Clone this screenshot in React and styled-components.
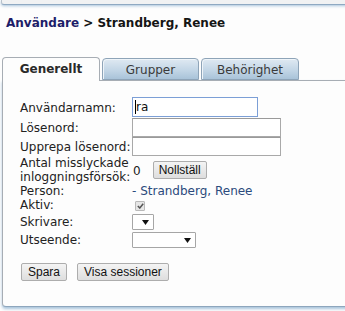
import React from "react";
import styled, { createGlobalStyle } from "styled-components";

const Global = createGlobalStyle`
  html, body { margin: 0; padding: 0; background: #fdfdfd; overflow: hidden; }
  body { font-family: "DejaVu Sans", Verdana, sans-serif; font-size: 12px; color: #222; }
`;

const Page = styled.div`
  width: 345px;
  height: 311px;
  display: flex;
  flex-direction: column;
`;

const TopBar = styled.div`
  height: 4px;
  margin-left: 1px;
  width: 360px;
  background: #f1f2f3;
  border-left: 1px solid #b8c2cc;
  border-bottom: 1px solid #8fa9c2;
  box-shadow: 0 1px 3px #a9c4dc;
  border-bottom-left-radius: 3px;
`;

const Title = styled.h1`
  margin: 11px 0 0 6px;
  font-size: 12px;
  line-height: 14px;
  font-weight: bold;
  color: #151515;
`;

const Crumb = styled.span`
  color: #1d1d69;
`;

const Tabs = styled.div`
  display: flex;
  align-items: flex-end;
  gap: 2px;
  margin: 27px 0 0 2px;
  height: 23px;
  position: relative;
  z-index: 1;
`;

const Tab = styled.div`
  box-sizing: border-box;
  width: ${(p) => p.$w}px;
  height: ${(p) => (p.$active ? 24 : 22)}px;
  margin-bottom: ${(p) => (p.$active ? -1 : 0)}px;
  border: 1px solid ${(p) => (p.$active ? "#a7adb4" : "#8ea4b8")};
  border-bottom: ${(p) => (p.$active ? "none" : "1px solid #8ea4b8")};
  border-radius: 4px 4px 0 0;
  background: ${(p) =>
    p.$active ? "#fdfdfd" : "linear-gradient(#dfe9f2, #c3d6e6 55%, #a9c3d9)"};
  box-shadow: ${(p) => (p.$active ? "none" : "inset 1px 1px 0 #eef4f9")};
  color: ${(p) => (p.$active ? "#2a2a2a" : "#3a3a3a")};
  font-weight: ${(p) => (p.$active ? "bold" : "normal")};
  font-size: 12px;
  display: flex;
  justify-content: center;
  padding-top: 4px;
  line-height: 14px;
`;

const Panel = styled.div`
  box-sizing: border-box;
  margin-left: 2px;
  width: 360px;
  height: 227px;
  border: 1px solid #a7adb4;
  border-radius: 0 0 0 4px;
  border-bottom-color: #8ea6bd;
  box-shadow: 0 2px 3px #a9c4dc;
  background: #fdfdfd;
  padding: 16px 0 0 17px;
`;

const Form = styled.div`
  display: grid;
  grid-template-columns: 112px auto;
  align-items: center;
`;

const Label = styled.div`
  height: ${(p) => p.$h}px;
  display: flex;
  align-items: center;
  line-height: 14px;
  color: #222;
  white-space: nowrap;
`;

const Value = styled.div`
  height: ${(p) => p.$h}px;
  display: flex;
  align-items: center;
  gap: 12px;
`;

const FakeInput = styled.div`
  box-sizing: border-box;
  width: ${(p) => p.$w}px;
  height: ${(p) => p.$h}px;
  border: 1px solid ${(p) => (p.$focus ? "#7c9fd6" : "#a9a9a9")};
  border-top-color: ${(p) => (p.$focus ? "#7c9fd6" : "#9a9a9a")};
  background: #fff;
  display: flex;
  align-items: center;
  padding-left: 2px;
  font-size: 12px;
  color: #111;
  align-self: ${(p) => (p.$top ? "flex-start" : "center")};
`;

const Caret = styled.span`
  display: inline-block;
  width: 1px;
  height: 14px;
  background: #000;
`;

const Button = styled.button`
  box-sizing: border-box;
  height: 18px;
  padding: 0 ${(p) => p.$pad || 6}px;
  font-family: "Liberation Sans", Arial, sans-serif;
  font-size: 12px;
  color: #111;
  border: 1px solid #adadad;
  border-radius: 2px;
  background: linear-gradient(#f4f4f4, #dedede);
  line-height: 16px;
`;

const Zero = styled.span`
  margin-left: 1px;
  padding-top: 2px;
`;

const PersonLink = styled.span`
  color: #2b4a7c;
`;

const Check = styled.span`
  box-sizing: border-box;
  width: 10px;
  height: 10px;
  margin-left: 3px;
  margin-top: 2px;
  border: 1px solid #b9b9b9;
  background: #e6e6e6;
  border-radius: 1px;
  display: flex;
  align-items: center;
  justify-content: center;
`;

const Select = styled.div`
  box-sizing: border-box;
  width: ${(p) => p.$w}px;
  height: 16px;
  border: 1px solid #a6a6a6;
  border-radius: 1px;
  background: #fff;
  display: flex;
  align-items: center;
  justify-content: flex-end;
  padding-right: 4px;
`;

const Actions = styled.div`
  display: flex;
  gap: 10px;
  margin-top: 14px;
  margin-left: 1px;
`;

const Arrow = () => (
  <svg width="7" height="5" viewBox="0 0 7 5">
    <path d="M0 0 H7 L3.5 5 Z" fill="#111" />
  </svg>
);

export default function App() {
  return (
    <Page>
      <Global />
      <TopBar />
      <Title>
        <Crumb>Användare</Crumb> &gt; Strandberg, Renee
      </Title>
      <Tabs>
        <Tab $active $w={98}>Generellt</Tab>
        <Tab $w={97}>Grupper</Tab>
        <Tab $w={98}>Behörighet</Tab>
      </Tabs>
      <Panel>
        <Form>
          <Label $h={21}>Användarnamn:</Label>
          <Value $h={21}>
            <FakeInput $focus $w={126} $h={20} $top>
              <Caret />ra
            </FakeInput>
          </Value>

          <Label $h={19}>Lösenord:</Label>
          <Value $h={19}>
            <FakeInput $w={149} $h={19} />
          </Value>

          <Label $h={19}>Upprepa lösenord:</Label>
          <Value $h={19}>
            <FakeInput $w={149} $h={19} />
          </Value>

          <Label $h={28}>
            Antal misslyckade
            <br />
            inloggningsförsök:
          </Label>
          <Value $h={28}>
            <Zero>0</Zero>
            <Button $pad={5}>Nollställ</Button>
          </Value>

          <Label $h={13}>Person:</Label>
          <Value $h={13}>
            <PersonLink>- Strandberg, Renee</PersonLink>
          </Value>

          <Label $h={16}>Aktiv:</Label>
          <Value $h={16}>
            <Check>
              <svg width="7" height="6" viewBox="0 0 7 6">
                <path d="M0.8 3 L2.8 5 L6.2 0.8" stroke="#555" strokeWidth="1.5" fill="none" />
              </svg>
            </Check>
          </Value>

          <Label $h={18}>Skrivare:</Label>
          <Value $h={18}>
            <Select $w={22}>
              <Arrow />
            </Select>
          </Value>

          <Label $h={18}>Utseende:</Label>
          <Value $h={18}>
            <Select $w={64}>
              <Arrow />
            </Select>
          </Value>
        </Form>
        <Actions>
          <Button>Spara</Button>
          <Button>Visa sessioner</Button>
        </Actions>
      </Panel>
    </Page>
  );
}
